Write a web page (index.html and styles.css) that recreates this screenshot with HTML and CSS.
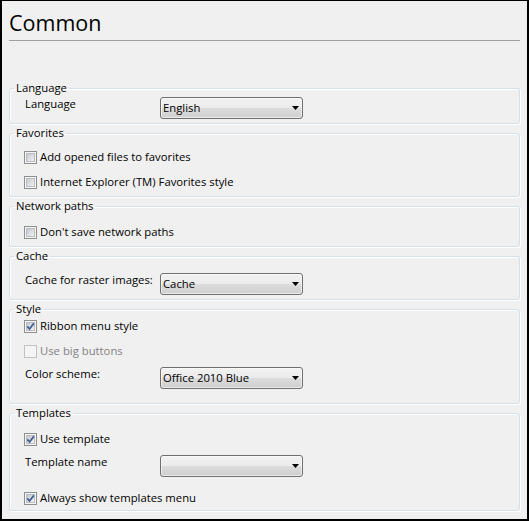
FILE: index.html
```html
<!DOCTYPE html>
<html>
<head>
<meta charset="utf-8">
<title>Common</title>
<link rel="stylesheet" href="styles.css">
</head>
<body>
<svg class="defs" width="0" height="0" aria-hidden="true">
  <defs>
    <linearGradient id="cbfill" x1="0" y1="0" x2="1" y2="1">
      <stop offset="0" stop-color="#c2c6cc"/>
      <stop offset="1" stop-color="#f4f4f5"/>
    </linearGradient>
    <symbol id="cb-off" viewBox="0 0 13 13">
      <rect x="0.5" y="0.5" width="12" height="12" fill="#f5f5f5" stroke="#8e8f8f"/>
      <rect x="2.5" y="2.5" width="8" height="8" fill="url(#cbfill)" stroke="#b9bcc1"/>
    </symbol>
    <symbol id="cb-on" viewBox="0 0 13 13">
      <rect x="0.5" y="0.5" width="12" height="12" fill="#f5f5f5" stroke="#8e8f8f"/>
      <rect x="2.5" y="2.5" width="8" height="8" fill="url(#cbfill)" stroke="#b9bcc1"/>
      <path d="M3.3 6.4 L5.5 9 L9.9 3.4" fill="none" stroke="#3f5d98" stroke-width="1.7"/>
    </symbol>
    <symbol id="cb-dis" viewBox="0 0 13 13">
      <rect x="0.5" y="0.5" width="12" height="12" fill="#f4f4f4" stroke="#c2c2c2"/>
    </symbol>
    <symbol id="arrow" viewBox="0 0 7 4">
      <path d="M0 0 H7 L3.5 4 Z" fill="#000"/>
    </symbol>
  </defs>
</svg>

<div class="page">
  <header class="head">
    <h1 class="title">Common</h1>
  </header>

  <fieldset class="group g-language">
    <legend>Language</legend>
    <div class="rows">
      <div class="combo-row">
        <span class="label">Language</span>
        <div class="combo"><span class="combo-text">English</span><svg class="arrow"><use href="#arrow"/></svg></div>
      </div>
    </div>
  </fieldset>

  <fieldset class="group g-favorites">
    <legend>Favorites</legend>
    <div class="rows">
      <label class="check-row"><svg class="cb"><use href="#cb-off"/></svg><span>Add opened files to favorites</span></label>
      <label class="check-row"><svg class="cb"><use href="#cb-off"/></svg><span>Internet Explorer (TM) Favorites style</span></label>
    </div>
  </fieldset>

  <fieldset class="group g-network">
    <legend>Network paths</legend>
    <div class="rows">
      <label class="check-row"><svg class="cb"><use href="#cb-off"/></svg><span>Don't save network paths</span></label>
    </div>
  </fieldset>

  <fieldset class="group g-cache">
    <legend>Cache</legend>
    <div class="rows">
      <div class="combo-row">
        <span class="label">Cache for raster images:</span>
        <div class="combo"><span class="combo-text">Cache</span><svg class="arrow"><use href="#arrow"/></svg></div>
      </div>
    </div>
  </fieldset>

  <fieldset class="group g-style">
    <legend>Style</legend>
    <div class="rows">
      <label class="check-row"><svg class="cb"><use href="#cb-on"/></svg><span>Ribbon menu style</span></label>
      <label class="check-row disabled"><svg class="cb"><use href="#cb-dis"/></svg><span>Use big buttons</span></label>
      <div class="combo-row">
        <span class="label">Color scheme:</span>
        <div class="combo"><span class="combo-text">Office 2010 Blue</span><svg class="arrow"><use href="#arrow"/></svg></div>
      </div>
    </div>
  </fieldset>

  <fieldset class="group g-templates">
    <legend>Templates</legend>
    <div class="rows">
      <label class="check-row"><svg class="cb"><use href="#cb-on"/></svg><span>Use template</span></label>
      <div class="combo-row">
        <span class="label">Template name</span>
        <div class="combo"><span class="combo-text"></span><svg class="arrow"><use href="#arrow"/></svg></div>
      </div>
      <label class="check-row"><svg class="cb"><use href="#cb-on"/></svg><span>Always show templates menu</span></label>
    </div>
  </fieldset>
</div>
</body>
</html>
```

FILE: styles.css
```css
* {
  box-sizing: border-box;
}

html,
body {
  margin: 0;
  padding: 0;
}

body {
  width: 529px;
  height: 521px;
  background: #f0f0f0;
  font-family: "Open Sans", "Noto Sans", sans-serif;
  font-size: 11.3px;
  color: #000;
}

.defs {
  display: block;
  width: 0;
  height: 0;
  overflow: hidden;
}

.page {
  width: 529px;
  height: 521px;
  border-style: solid;
  border-color: #000;
  border-width: 1px 2px 2px 2px;
  padding: 0 7px;
  background: #f0f0f0;
  display: flex;
  flex-direction: column;
}

.head {
  height: 40px;
  flex: none;
  border-bottom: 1px solid #a0a0a0;
  margin-bottom: 40px;
  padding-top: 7px;
}

.title {
  margin: 0;
  font-weight: normal;
  font-size: 21.5px;
  line-height: 30px;
  color: #000;
}

.group {
  margin: 0 0 2px 0;
  min-width: 0;
  border: 1px solid #d5dfe5;
  border-radius: 3px;
  box-shadow: inset 1px 1px 0 #fff, 1px 1px 0 #fff;
  padding: 0 4px;
  flex: none;
}

.group legend {
  padding: 0 2px;
  margin: 0;
  line-height: 14px;
  font-size: 11.3px;
}

.g-language { padding-top: 2px; padding-bottom: 4px; }
.g-favorites { padding-top: 7px; padding-bottom: 4px; }
.g-network { padding-top: 9px; padding-bottom: 4px; }
.g-cache { padding-top: 10px; padding-bottom: 4px; }
.g-style { padding-top: 0; padding-bottom: 14px; }
.g-templates { padding-top: 9px; padding-bottom: 2px; }

.rows {
  display: flex;
  flex-direction: column;
  gap: 5px;
  padding-left: 10px;
}

.check-row {
  display: flex;
  align-items: flex-start;
  height: 20px;
  line-height: 20px;
  white-space: nowrap;
}

.check-row .cb {
  width: 13px;
  height: 13px;
  flex: none;
  margin-top: 4px;
  margin-right: 3px;
}

.check-row.disabled {
  color: #838383;
}

.check-row + .combo-row {
  margin-top: 1px;
}

.combo-row + .check-row {
  margin-top: 6px;
}

.combo-row {
  display: flex;
  align-items: flex-start;
  height: 22px;
}

.label {
  width: 136px;
  flex: none;
  line-height: 14px;
  padding-left: 1px;
  white-space: nowrap;
}

.combo {
  width: 143px;
  height: 22px;
  border: 1px solid #707070;
  border-radius: 3px;
  background: linear-gradient(#f2f2f2 0%, #ebebeb 50%, #dddddd 50%, #cfcfcf 100%);
  box-shadow: inset 0 0 0 1px rgba(255, 255, 255, 0.55);
  display: flex;
  align-items: center;
  padding: 0 3px 0 2px;
}

.combo-text {
  flex: 1;
  line-height: 20px;
  white-space: nowrap;
}

.arrow {
  width: 7px;
  height: 4px;
  flex: none;
}
```
